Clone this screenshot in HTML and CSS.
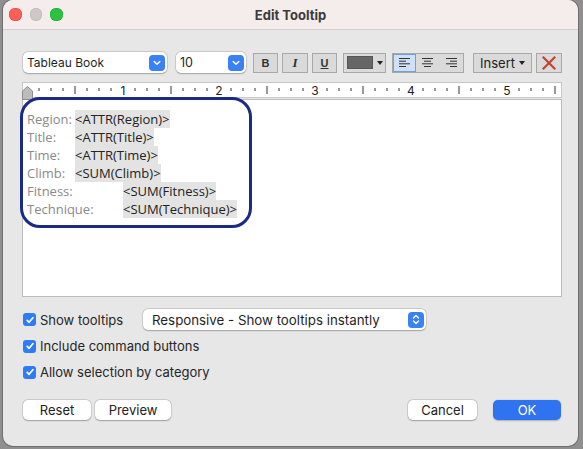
FILE: index.html
```html
<!DOCTYPE html>
<html>
<head>
<meta charset="utf-8">
<link rel="stylesheet" href="styles.css">
</head>
<body>
<div class="window">
  <div class="titlebar">
    <div class="lights"><span class="light red"></span><span class="light gray"></span><span class="light green"></span></div>
    <div class="title">Edit Tooltip</div>
    <div></div>
  </div>
  <div class="content">
    <div class="toolbar">
      <div class="select font-select"><span>Tableau Book</span><span class="chev"><svg width="8" height="6" viewBox="0 0 8 6"><path d="M1.2 1.5l2.8 2.8 2.8-2.8" stroke="#fff" stroke-width="1.5" fill="none" stroke-linecap="round" stroke-linejoin="round"/></svg></span></div>
      <div class="select size-select"><span>10</span><span class="chev"><svg width="8" height="6" viewBox="0 0 8 6"><path d="M1.2 1.5l2.8 2.8 2.8-2.8" stroke="#fff" stroke-width="1.5" fill="none" stroke-linecap="round" stroke-linejoin="round"/></svg></span></div>
      <div class="tbtn bold-btn">B</div>
      <div class="tbtn italic-btn">I</div>
      <div class="tbtn under-btn">U</div>
      <div class="tbtn color-btn"><span class="swatch"></span><span class="tri"></span></div>
      <div class="align-group">
        <div class="acell selected"><svg width="11" height="9" viewBox="0 0 11 9"><path d="M0 .5h11M0 3.2h7M0 5.8h11M0 8.5h7" stroke="#333" stroke-width="1"/></svg></div>
        <div class="acell"><svg width="11" height="9" viewBox="0 0 11 9"><path d="M0 .5h11M2 3.2h7M0 5.8h11M2 8.5h7" stroke="#333" stroke-width="1"/></svg></div>
        <div class="acell"><svg width="11" height="9" viewBox="0 0 11 9"><path d="M0 .5h11M4 3.2h7M0 5.8h11M4 8.5h7" stroke="#333" stroke-width="1"/></svg></div>
      </div>
      <div class="tbtn insert-btn"><span>Insert</span><span class="tri"></span></div>
      <div class="tbtn clear-btn"><svg width="14" height="14" viewBox="0 0 14 14"><path d="M1.5 1.5l11 11M12.5 1.5l-11 11" stroke="#c4452c" stroke-width="2.2" stroke-linecap="square"/></svg></div>
    </div>

    <div class="editor">
      <div class="ruler">
        <svg class="ruler-svg" width="538" height="14" viewBox="0 0 538 14">
          <path d="M16 5v3M28 5v3M40 5v3M64 5v3M76 5v3M88 5v3M112 5v3M124 5v3M136 5v3M160 5v3M172 5v3M184 5v3M208 5v3M220 5v3M232 5v3M256 5v3M268 5v3M280 5v3M304 5v3M316 5v3M328 5v3M352 5v3M364 5v3M376 5v3M400 5v3M412 5v3M424 5v3M448 5v3M460 5v3M472 5v3M496 5v3M508 5v3M520 5v3" stroke="#333" stroke-width="1"/>
          <path d="M52 3v8M148 3v8M244 3v8M340 3v8M436 3v8M532 3v8" stroke="#333" stroke-width="1"/>
          <g class="rnum">
            <text x="100" y="11.5" text-anchor="middle">1</text>
            <text x="196" y="11.5" text-anchor="middle">2</text>
            <text x="292" y="11.5" text-anchor="middle">3</text>
            <text x="388" y="11.5" text-anchor="middle">4</text>
            <text x="484" y="11.5" text-anchor="middle">5</text>
          </g>
        </svg>
        <svg class="marker" width="11" height="14" viewBox="0 0 11 14"><path d="M5.5 .5L10.5 5v8.5H.5V5z" fill="#bcbcbc" stroke="#8c8c8c" stroke-width="1"/></svg>
      </div>
      <div class="textarea">
        <div class="line"><span class="lbl">Region:</span><span class="val">&lt;ATTR(Region)&gt;</span></div>
        <div class="line"><span class="lbl">Title:</span><span class="val">&lt;ATTR(Title)&gt;</span></div>
        <div class="line"><span class="lbl">Time:</span><span class="val">&lt;ATTR(Time)&gt;</span></div>
        <div class="line"><span class="lbl">Climb:</span><span class="val">&lt;SUM(Climb)&gt;</span></div>
        <div class="line"><span class="lbl wide">Fitness:</span><span class="val">&lt;SUM(Fitness)&gt;</span></div>
        <div class="line"><span class="lbl wide">Technique:</span><span class="val">&lt;SUM(Technique)&gt;</span></div>
      </div>
      <div class="annotation"></div>
    </div>

    <div class="options">
      <div class="row">
        <label class="check first"><span class="box"><svg width="10" height="10" viewBox="0 0 10 10"><path d="M2.2 5.3l1.9 2 3.8-4.6" stroke="#fff" stroke-width="1.7" fill="none" stroke-linecap="round" stroke-linejoin="round"/></svg></span><span>Show tooltips</span></label>
        <div class="select resp-select"><span>Responsive - Show tooltips instantly</span><span class="chev"><svg width="8" height="11" viewBox="0 0 8 11"><path d="M1.5 4l2.5-2.5 2.5 2.5M1.5 7l2.5 2.5 2.5-2.5" stroke="#fff" stroke-width="1.4" fill="none" stroke-linecap="round" stroke-linejoin="round"/></svg></span></div>
      </div>
      <div class="row">
        <label class="check"><span class="box"><svg width="10" height="10" viewBox="0 0 10 10"><path d="M2.2 5.3l1.9 2 3.8-4.6" stroke="#fff" stroke-width="1.7" fill="none" stroke-linecap="round" stroke-linejoin="round"/></svg></span><span>Include command buttons</span></label>
      </div>
      <div class="row">
        <label class="check"><span class="box"><svg width="10" height="10" viewBox="0 0 10 10"><path d="M2.2 5.3l1.9 2 3.8-4.6" stroke="#fff" stroke-width="1.7" fill="none" stroke-linecap="round" stroke-linejoin="round"/></svg></span><span>Allow selection by category</span></label>
      </div>
    </div>

    <div class="buttons">
      <div class="btn reset">Reset</div>
      <div class="btn preview">Preview</div>
      <div class="btn cancel">Cancel</div>
      <div class="btn ok">OK</div>
    </div>
  </div>
</div>
</body>
</html>
```

FILE: styles.css
```css
* { box-sizing: border-box; }

body {
  margin: 0;
  width: 583px;
  height: 449px;
  overflow: hidden;
  background: #8f8f8f;
  font-family: Inter, "Noto Sans", sans-serif;
  color: #262626;
}

.window {
  margin-left: 3px;
  width: 575px;
  height: 446px;
  background: #e7e7e7;
  border-radius: 10px;
  overflow: hidden;
  box-shadow: 0 0 0 1px rgba(0, 0, 0, 0.22);
}

.titlebar {
  height: 30px;
  background: #f5ecec;
  border-bottom: 1px solid #d5cfcf;
  display: grid;
  grid-template-columns: 1fr auto 1fr;
  align-items: center;
}

.lights {
  display: flex;
  gap: 8px;
  padding-left: 6px;
}

.light {
  width: 12.5px;
  height: 12.5px;
  border-radius: 50%;
}
.light.red { background: #fe5f57; box-shadow: inset 0 0 0 .5px #e0443e; }
.light.gray { background: #cdc9c9; box-shadow: inset 0 0 0 .5px #b9b5b5; }
.light.green { background: #29c33f; box-shadow: inset 0 0 0 .5px #1aab29; }

.title {
  font-weight: 700;
  font-size: 13px;
  color: #3b3b3b;
}

.content {
  padding: 22px 16px 0 20px;
}

/* toolbar */
.toolbar {
  display: flex;
  height: 21px;
  align-items: center;
}

.select {
  height: 21px;
  display: flex;
  align-items: center;
  justify-content: space-between;
  background: #fff;
  border-radius: 5px;
  box-shadow: 0 0 0 .5px rgba(0, 0, 0, 0.18), 0 .5px 1.5px rgba(0, 0, 0, 0.22);
  padding: 0 2px 0 4px;
  font-size: 13px;
  color: #1f1f1f;
}

.font-select { width: 144px; font-size: 12px; }
.size-select { width: 70px; margin-left: 9px; font-size: 12.5px; }

.chev {
  width: 16px;
  height: 16px;
  background: #3a80f6;
  border-radius: 4px;
  display: flex;
  align-items: center;
  justify-content: center;
}

.tbtn {
  height: 20px;
  background: #dadada;
  border: 1px solid #a8a8a8;
  display: flex;
  align-items: center;
  justify-content: center;
  color: #333;
}

.bold-btn {
  width: 25px;
  margin-left: 7px;
  font-family: "Liberation Sans", sans-serif;
  font-weight: 700;
  font-size: 11px;
}

.italic-btn {
  width: 26px;
  margin-left: 4px;
  font-family: "Liberation Serif", serif;
  font-style: italic;
  font-weight: 700;
  font-size: 13px;
}

.under-btn {
  width: 25px;
  margin-left: 4px;
  font-family: "Liberation Sans", sans-serif;
  font-weight: 700;
  font-size: 11px;
  text-decoration: underline;
}

.color-btn {
  width: 43px;
  margin-left: 6px;
  justify-content: flex-start;
  padding-left: 3px;
  gap: 4px;
}

.swatch {
  width: 26px;
  height: 13px;
  background: #666;
  border: 1px solid #555;
}

.tri {
  width: 0;
  height: 0;
  border-left: 3.5px solid transparent;
  border-right: 3.5px solid transparent;
  border-top: 4px solid #222;
}

.align-group {
  width: 72px;
  height: 20px;
  margin-left: 6px;
  display: flex;
  border: 1px solid #a8a8a8;
  background: #dadada;
}

.acell {
  flex: 1;
  display: flex;
  align-items: center;
  justify-content: center;
}

.acell.selected {
  background: #cfe0f9;
  box-shadow: inset 0 0 0 1px #6f9fe6;
}

.insert-btn {
  width: 59px;
  margin-left: 9px;
  gap: 4px;
  font-size: 13px;
  color: #222;
}

.clear-btn {
  width: 26px;
  margin-left: 4px;
}

/* editor */
.editor {
  position: relative;
  margin-top: 9px;
  margin-left: -1px;
}

.ruler {
  position: relative;
  height: 16px;
  background: #fff;
  border: 1px solid #c6c6c6;
}

.ruler-svg { display: block; }

.rnum text {
  font-family: Inter, "Noto Sans", sans-serif;
  font-size: 12px;
  fill: #222;
}

.marker {
  position: absolute;
  left: -1px;
  top: 3px;
}

.textarea {
  margin-top: 1px;
  height: 198px;
  background: #fff;
  border: 1px solid #bcbcbc;
  padding: 10px 4px;
  font-family: "Open Sans", "Noto Sans", sans-serif;
  font-size: 13px;
  line-height: 18px;
}

.line {
  display: flex;
  height: 18px;
  white-space: nowrap;
}

.lbl {
  flex: 0 0 48px;
  color: #8a8a8a;
}
.lbl.wide { flex-basis: 96px; }

.val {
  background: #e3e3e3;
  color: #222;
}

.annotation {
  position: absolute;
  left: -2px;
  top: 15px;
  width: 232px;
  height: 131px;
  border: 3.5px solid #1a2a85;
  border-radius: 20px;
}

/* options */
.options {
  margin-top: 12px;
  display: flex;
  flex-direction: column;
  gap: 6px;
}

.row {
  display: flex;
  align-items: center;
  height: 20px;
}
.row:first-child { height: 21px; }

.check {
  display: flex;
  align-items: center;
  gap: 4px;
  font-size: 13px;
  color: #262626;
}

.check.first { width: 120px; }

.box {
  width: 13px;
  height: 13px;
  border-radius: 3px;
  background: #2f7cf6;
  display: flex;
  align-items: center;
  justify-content: center;
}

.resp-select {
  width: 283px;
  padding-left: 9px;
  font-size: 13.3px;
}

/* buttons */
.buttons {
  margin-top: 18px;
  display: flex;
  gap: 4px;
  padding-right: 1px;
}

.btn {
  height: 20px;
  display: flex;
  align-items: center;
  justify-content: center;
  background: #fff;
  border-radius: 5px;
  box-shadow: 0 0 0 .5px rgba(0, 0, 0, 0.16), 0 .5px 1.5px rgba(0, 0, 0, 0.25);
  font-size: 13px;
  color: #222;
}

.reset { width: 68px; }
.preview { width: 76px; }
.cancel { width: 69px; margin-left: auto; }
.ok {
  width: 68px;
  margin-left: 12px;
  background: #2f73f1;
  color: #fff;
  box-shadow: 0 .5px 1.5px rgba(0, 0, 0, 0.25);
}
```
